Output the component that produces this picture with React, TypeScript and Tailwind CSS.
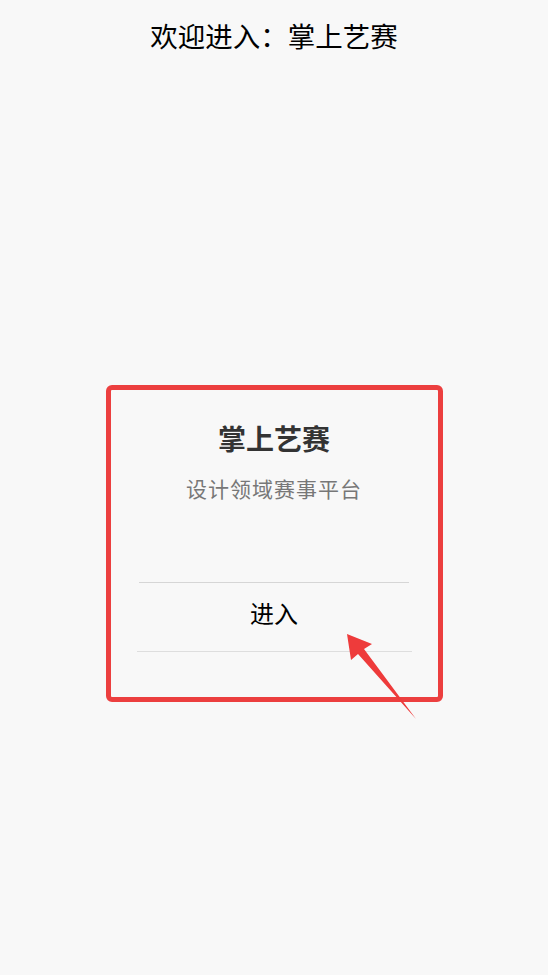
import React from 'react';

const App: React.FC = () => {
  return (
    <div
      className="relative min-h-screen bg-[#f8f8f8] flex flex-col items-center"
      style={{ fontFamily: '"Noto Sans CJK SC", "Noto Sans", sans-serif' }}
    >
      {/* 顶部标题 */}
      <h1 className="pt-[15px] text-[27.5px] leading-[40px] text-black font-normal">欢迎进入：掌上艺赛</h1>

      {/* 卡片 */}
      <div className="mt-[330px] w-[337px] h-[317px] border-[5px] border-[#ec3f3f] rounded-[6px] flex flex-col items-center">
        <h2 className="mt-[29px] text-[28px] leading-[38px] font-bold text-[#333333]">掌上艺赛</h2>
        <p className="mt-[16px] text-[21px] leading-[30px] tracking-[1px] text-[#777777]">设计领域赛事平台</p>
        <div className="mt-[79px] w-[270px] h-px bg-[#d6d6d6]" />
        <button className="h-[68px] pb-[8px] text-[24px] leading-[30px] text-black">进入</button>
        <div className="w-[275px] h-px bg-[#dedede]" />
      </div>

      {/* 标注箭头 */}
      <svg className="absolute left-0 top-0 pointer-events-none" width="548" height="975" viewBox="0 0 548 975">
        <polygon
          points="347,634 372,644 364,649 416,719 358,654 351,660"
          fill="#ee3b3b"
        />
      </svg>
    </div>
  );
};

export default App;
